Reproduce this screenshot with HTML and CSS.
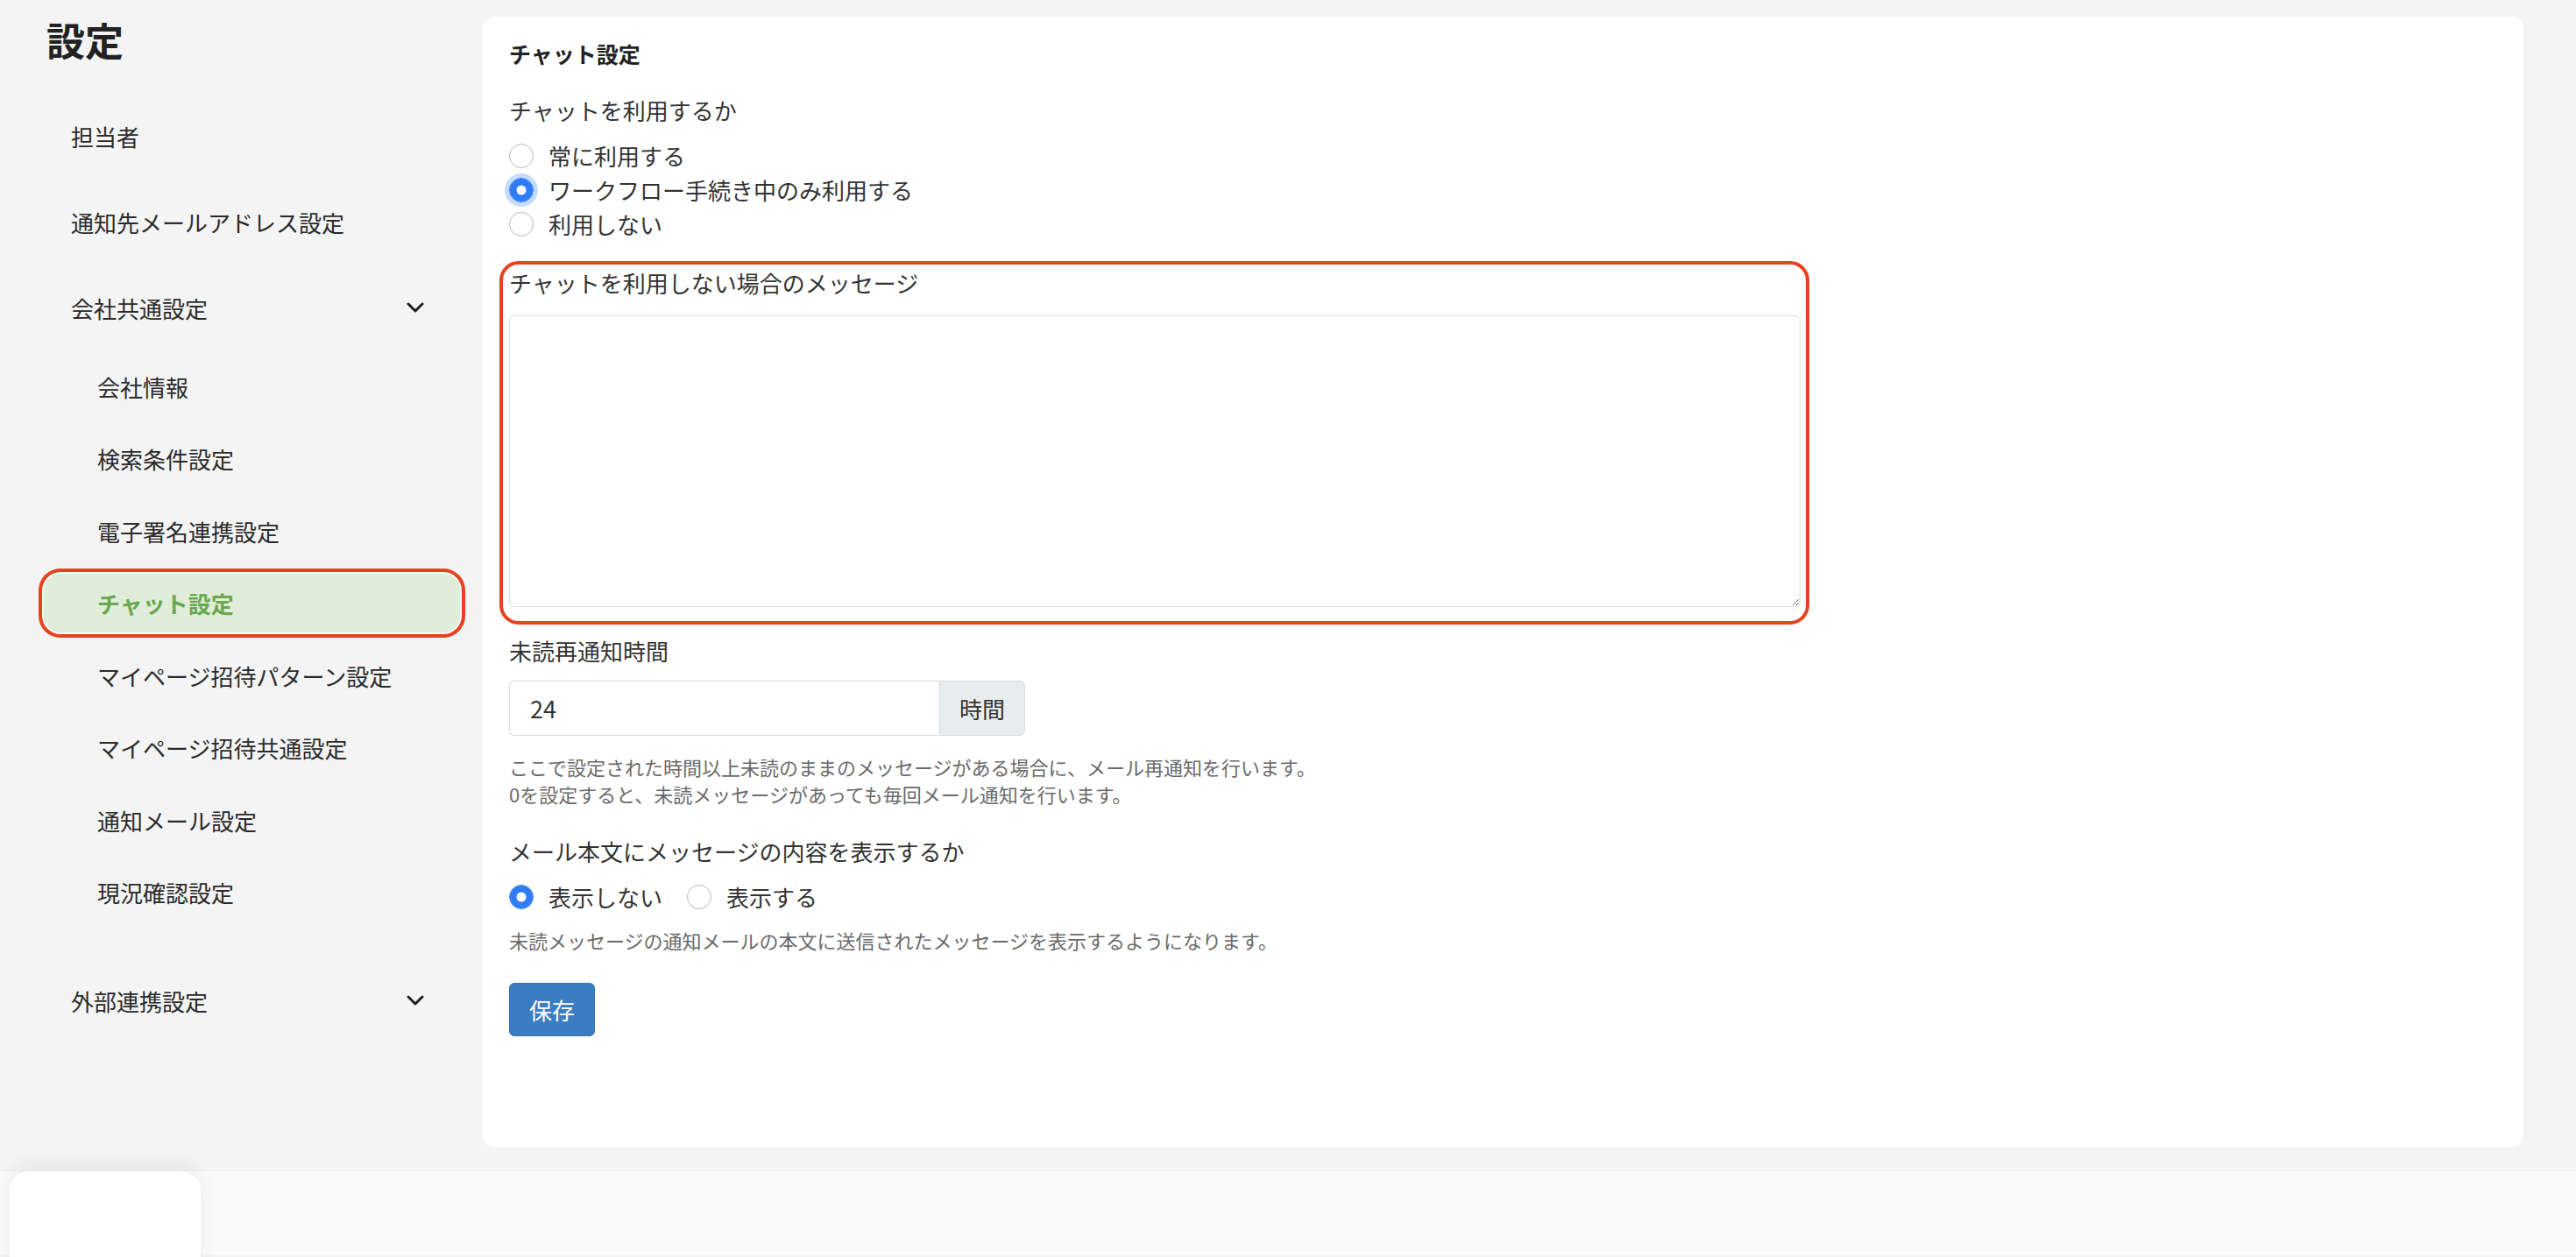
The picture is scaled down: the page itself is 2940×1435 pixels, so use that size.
FILE: index.html
```html
<!DOCTYPE html>
<html lang="ja">
<head>
<meta charset="utf-8">
<title>設定</title>
<link rel="stylesheet" href="styles.css">
</head>
<body>
<div class="layout">
  <aside class="sidebar">
    <h1 class="page-title">設定</h1>
    <ul class="nav">
      <li class="nav-item"><span>担当者</span></li>
      <li class="nav-item"><span>通知先メールアドレス設定</span></li>
      <li class="nav-item">
        <span>会社共通設定</span>
        <svg class="chevron" viewBox="0 0 20 12" width="20" height="12"><polyline points="2,2 10,10 18,2" fill="none" stroke="#1e1e1e" stroke-width="3" stroke-linecap="round" stroke-linejoin="round"/></svg>
      </li>
      <li>
        <ul class="subnav">
          <li class="sub-item"><span>会社情報</span></li>
          <li class="sub-item"><span>検索条件設定</span></li>
          <li class="sub-item"><span>電子署名連携設定</span></li>
          <li class="sub-item active"><span class="active-pill">チャット設定</span></li>
          <li class="sub-item"><span>マイページ招待パターン設定</span></li>
          <li class="sub-item"><span>マイページ招待共通設定</span></li>
          <li class="sub-item"><span>通知メール設定</span></li>
          <li class="sub-item"><span>現況確認設定</span></li>
        </ul>
      </li>
      <li class="nav-item">
        <span>外部連携設定</span>
        <svg class="chevron" viewBox="0 0 20 12" width="20" height="12"><polyline points="2,2 10,10 18,2" fill="none" stroke="#1e1e1e" stroke-width="3" stroke-linecap="round" stroke-linejoin="round"/></svg>
      </li>
    </ul>
  </aside>
  <main class="main">
    <section class="panel">
      <h2 class="panel-title">チャット設定</h2>
      <div class="form">
        <div class="label">チャットを利用するか</div>
        <div class="radio-stack">
          <label class="radio-row"><input type="radio" name="use" class="radio"><span>常に利用する</span></label>
          <label class="radio-row"><input type="radio" name="use" class="radio focused" checked><span>ワークフロー手続き中のみ利用する</span></label>
          <label class="radio-row"><input type="radio" name="use" class="radio"><span>利用しない</span></label>
        </div>
        <div class="group highlighted">
          <div class="label group-label">チャットを利用しない場合のメッセージ</div>
          <textarea class="textarea"></textarea>
        </div>
        <div class="label label-gap">未読再通知時間</div>
        <div class="input-group">
          <input class="input" type="text" value="24">
          <span class="addon">時間</span>
        </div>
        <p class="help help-multi">ここで設定された時間以上未読のままのメッセージがある場合に、メール再通知を行います。<br>0を設定すると、未読メッセージがあっても毎回メール通知を行います。</p>
        <div class="label label-gap">メール本文にメッセージの内容を表示するか</div>
        <div class="radio-inline">
          <label class="radio-row"><input type="radio" name="show" class="radio" checked><span>表示しない</span></label>
          <label class="radio-row"><input type="radio" name="show" class="radio"><span>表示する</span></label>
        </div>
        <p class="help help-single">未読メッセージの通知メールの本文に送信されたメッセージを表示するようになります。</p>
        <button class="btn-save" type="button">保存</button>
      </div>
    </section>
  </main>
</div>
<footer class="footer">
  <div class="float-card"></div>
</footer>
</body>
</html>
```

FILE: styles.css
```css
* { box-sizing: border-box; }
html, body {
  margin: 0;
  padding: 0;
  height: 100%;
  overflow: hidden;
}
body {
  background: #f4f4f4;
  font-family: "Noto Sans CJK JP", "Noto Sans", sans-serif;
  color: #222;
}
ul { list-style: none; margin: 0; padding: 0; }

.layout {
  display: flex;
  height: 1339px;
}

/* Sidebar */
.sidebar {
  flex: none;
  width: 551px;
  padding-top: 17px;
}
.page-title {
  margin: 0 0 0 53px;
  font-size: 44px;
  line-height: 56px;
  font-weight: 700;
  color: #222;
}
.nav {
  margin: 33px 0 0 43px;
  width: 487px;
}
.nav-item {
  height: 98px;
  display: flex;
  align-items: center;
  justify-content: space-between;
  padding: 0 46px 0 38px;
  font-size: 26px;
  color: #2a2a2a;
}
.chevron { display: block; }
.subnav { padding-bottom: 33px; }
.sub-item {
  height: 82.5px;
  display: flex;
  align-items: center;
  padding-left: 68px;
  font-size: 26px;
  color: #2a2a2a;
}
.sub-item.active {
  padding: 7px 5px 7px 7px;
}
.active-pill {
  flex: 1;
  height: 67px;
  display: flex;
  align-items: center;
  padding-left: 61px;
  background: #e1eddb;
  color: #6aa84f;
  font-weight: 700;
  border-radius: 19px;
  box-shadow: 0 0 0 2px #f7f7f7, 0 0 0 6px #e8411f;
}

/* Main */
.main {
  flex: 1;
  padding: 19px 60px 29px 0;
  display: flex;
}
.panel {
  flex: 1;
  background: #fff;
  border-radius: 14px;
  padding: 22px 30px 0 30px;
}
.panel-title {
  margin: 0;
  font-size: 25px;
  line-height: 40px;
  font-weight: 700;
  color: #222;
}
.form {
  width: 1474px;
  margin-top: 25px;
}
.label {
  font-size: 26px;
  line-height: 40px;
  color: #333;
}
.label-gap { margin-top: 30px; }

.radio-stack { margin-top: 12px; }
.radio-row {
  display: flex;
  align-items: center;
  height: 39px;
  font-size: 26px;
  color: #333;
}
.radio-row span { margin-left: 17px; }
.radio {
  -webkit-appearance: none;
  appearance: none;
  margin: 0;
  width: 28px;
  height: 28px;
  flex: none;
  border-radius: 50%;
  border: 1.5px solid #b9b9be;
  background: #fff;
}
.radio:checked {
  border-color: #2f7cf6;
  background: #fff;
  box-shadow: inset 0 0 0 7.5px #2f7cf6;
}
.radio.focused {
  box-shadow: inset 0 0 0 7.5px #2f7cf6, 0 0 0 5px #c6dbfd;
}
.radio-inline {
  display: flex;
  gap: 28px;
  margin-top: 12px;
}

.group {
  position: relative;
  margin-top: 25px;
}
.group-label { padding-top: 3px; }
.highlighted::after {
  content: "";
  position: absolute;
  top: -2px;
  left: -11px;
  right: -10px;
  bottom: -20px;
  border: 4px solid #e8411f;
  border-radius: 22px;
  pointer-events: none;
}
.textarea {
  display: block;
  width: 100%;
  height: 333px;
  margin-top: 17px;
  border: 1.5px solid #dcdde2;
  border-radius: 6px;
  resize: vertical;
  font: inherit;
  outline: none;
}

.input-group {
  display: flex;
  width: 589px;
  height: 63px;
  margin-top: 14px;
}
.input {
  flex: 1;
  min-width: 0;
  border: 1.5px solid #d8dbe0;
  border-right: none;
  border-radius: 6px 0 0 6px;
  padding: 0 0 0 23px;
  font-family: "Noto Sans CJK JP", sans-serif;
  font-size: 27px;
  color: #333;
  outline: none;
}
.addon {
  width: 98px;
  display: flex;
  align-items: center;
  justify-content: center;
  background: #e9ecef;
  border: 1.5px solid #d8dbe0;
  border-radius: 0 6px 6px 0;
  font-size: 26px;
  color: #333;
}
.help {
  margin: 0;
  font-size: 22px;
  line-height: 31px;
  color: #6a6a6a;
}
.help-multi { margin-top: 20px; }
.help-single { margin-top: 15px; }

.btn-save {
  display: block;
  margin-top: 33px;
  width: 98px;
  height: 61px;
  border: 1px solid #3573b3;
  border-radius: 6px;
  background: #3b7dc1;
  color: #fff;
  font-family: "Noto Sans CJK JP", sans-serif;
  font-size: 26px;
  padding: 0;
}

/* Footer */
.footer {
  height: 96px;
  background: #fafafa;
  padding-left: 11px;
  box-shadow: 0 -1px 0 #f0f0f0;
}
.float-card {
  width: 218px;
  height: 120px;
  margin-top: -2px;
  background: #fff;
  border-radius: 22px 22px 0 0;
  box-shadow: 0 -6px 24px rgba(0, 0, 0, 0.07);
}
```
